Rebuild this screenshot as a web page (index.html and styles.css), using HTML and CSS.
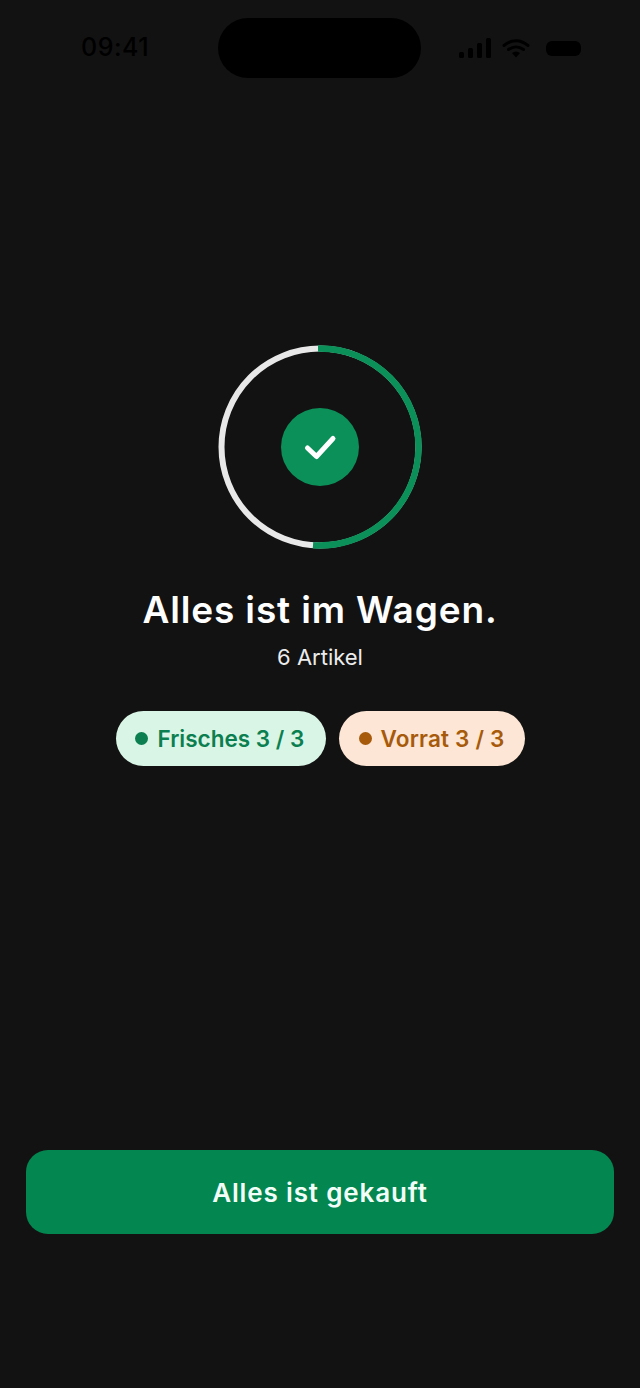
FILE: index.html
```html
<!DOCTYPE html>
<html lang="de">
<head>
<meta charset="utf-8">
<title>Alles ist im Wagen</title>
<link rel="stylesheet" href="styles.css">
</head>
<body>
<main class="screen">
  <header class="status">
    <span class="time">09:41</span>
    <div class="island"></div>
    <div class="status-icons">
      <svg class="signal" width="32" height="22" viewBox="0 0 32 22"><rect x="0" y="15" width="5" height="6" rx="1.500"/><rect x="9" y="11" width="5" height="10" rx="1.500"/><rect x="18" y="6" width="5" height="15" rx="1.500"/><rect x="27" y="1" width="5" height="20" rx="1.500"/></svg>
      <svg class="wifi" width="28" height="20" viewBox="0 0 28 20"><path d="M2 7.500C9.500 1 18.500 1 26 7.500M6.500 11.500C11 8 17 8 21.500 11.500" fill="none" stroke="#000" stroke-width="3" stroke-linecap="round"/><path d="M10 15c2.500-2 5.500-2 8 0l-4 4.500z"/></svg>
      <div class="battery"></div>
    </div>
  </header>
  <section class="hero">
    <div class="ring-wrap">
      <svg class="ring" width="204" height="204" viewBox="0 0 204 204">
        <circle cx="102" cy="102" r="98.500" fill="none" stroke="#e8e8e8" stroke-width="6"/>
        <path d="M100 3.500L102 3.500A98.500 98.500 0 1 1 95 200.250" fill="none" stroke="#0b9059" stroke-width="6.500"/>
      </svg>
      <div class="badge">
        <svg width="34" height="28" viewBox="0 0 34 28"><path d="M4.500 15L13.500 23.500L30 5.500" fill="none" stroke="#fff" stroke-width="5" stroke-linecap="round" stroke-linejoin="round"/></svg>
      </div>
    </div>
    <h1 class="title">Alles ist im Wagen.</h1>
    <p class="sub">6 Artikel</p>
    <div class="chips">
      <div class="chip chip-fresh"><span class="dot"></span>Frisches 3 / 3</div>
      <div class="chip chip-stock"><span class="dot"></span>Vorrat 3 / 3</div>
    </div>
  </section>
  <button class="cta">Alles ist gekauft</button>
</main>
</body>
</html>
```
FILE: styles.css
```css
* { box-sizing: border-box; }
html, body { margin: 0; padding: 0; }
body { background: #121212; font-family: "Inter", "Liberation Sans", sans-serif; }
.screen {
  width: 640px;
  height: 1388px;
  display: flex;
  flex-direction: column;
  background: #121212;
  overflow: hidden;
}
.status {
  height: 78px;
  padding-top: 18px;
  padding-left: 81px;
  display: flex;
}
.time {
  width: 137px;
  padding-top: 14px;
  font-size: 25px;
  line-height: 30px;
  font-weight: 500;
  color: #000;
  letter-spacing: 0.5px;
}
.island { width: 203px; height: 60px; border-radius: 30px; background: #000; }
.status-icons { margin-left: 38px; display: flex; align-items: center; height: 60px; }
.status-icons svg { fill: #000; flex: none; }
.wifi { margin-left: 11px; }
.battery { margin-left: 16px; width: 35px; height: 15px; border-radius: 6px; background: #000; }
.hero {
  padding-top: 267px;
  display: flex;
  flex-direction: column;
  align-items: center;
}
.ring-wrap {
  width: 204px;
  height: 204px;
  display: flex;
  align-items: center;
  justify-content: center;
  position: relative;
}
.ring { position: absolute; inset: 0; }
.badge {
  width: 78px;
  height: 78px;
  border-radius: 50%;
  background: #0b9059;
  display: flex;
  align-items: center;
  justify-content: center;
  position: relative;
}
.title {
  margin: 38px 0 0;
  font-size: 37px;
  line-height: 46px;
  font-weight: 600;
  color: #fff;
  letter-spacing: 0.85px;
}
.sub {
  margin: 10px 0 0;
  font-size: 22px;
  line-height: 28px;
  font-weight: 400;
  color: #ececec;
}
.chips { margin-top: 40px; display: flex; gap: 13px; }
.chip {
  height: 55px;
  padding: 0 21px 0 19px;
  border-radius: 27.500px;
  display: flex;
  align-items: center;
  gap: 10px;
  font-size: 22.500px;
  font-weight: 600;
}
.dot { width: 13px; height: 13px; border-radius: 50%; background: currentColor; flex: none; }
.chip-fresh { background: #d9f5e6; color: #0b7f50; width: 210px; }
.chip-stock { background: #fde6d5; color: #a65a0a; width: 186px; padding: 0 19px 0 20px; gap: 9px; letter-spacing: 0.2px; }
.cta {
  margin: 384px 26px 0;
  height: 84px;
  width: 588px;
  border: 0;
  border-radius: 22px;
  background: #03864f;
  color: #f2fff8;
  font-family: inherit;
  font-size: 26px;
  font-weight: 600;
  letter-spacing: 0.85px;
}
```
